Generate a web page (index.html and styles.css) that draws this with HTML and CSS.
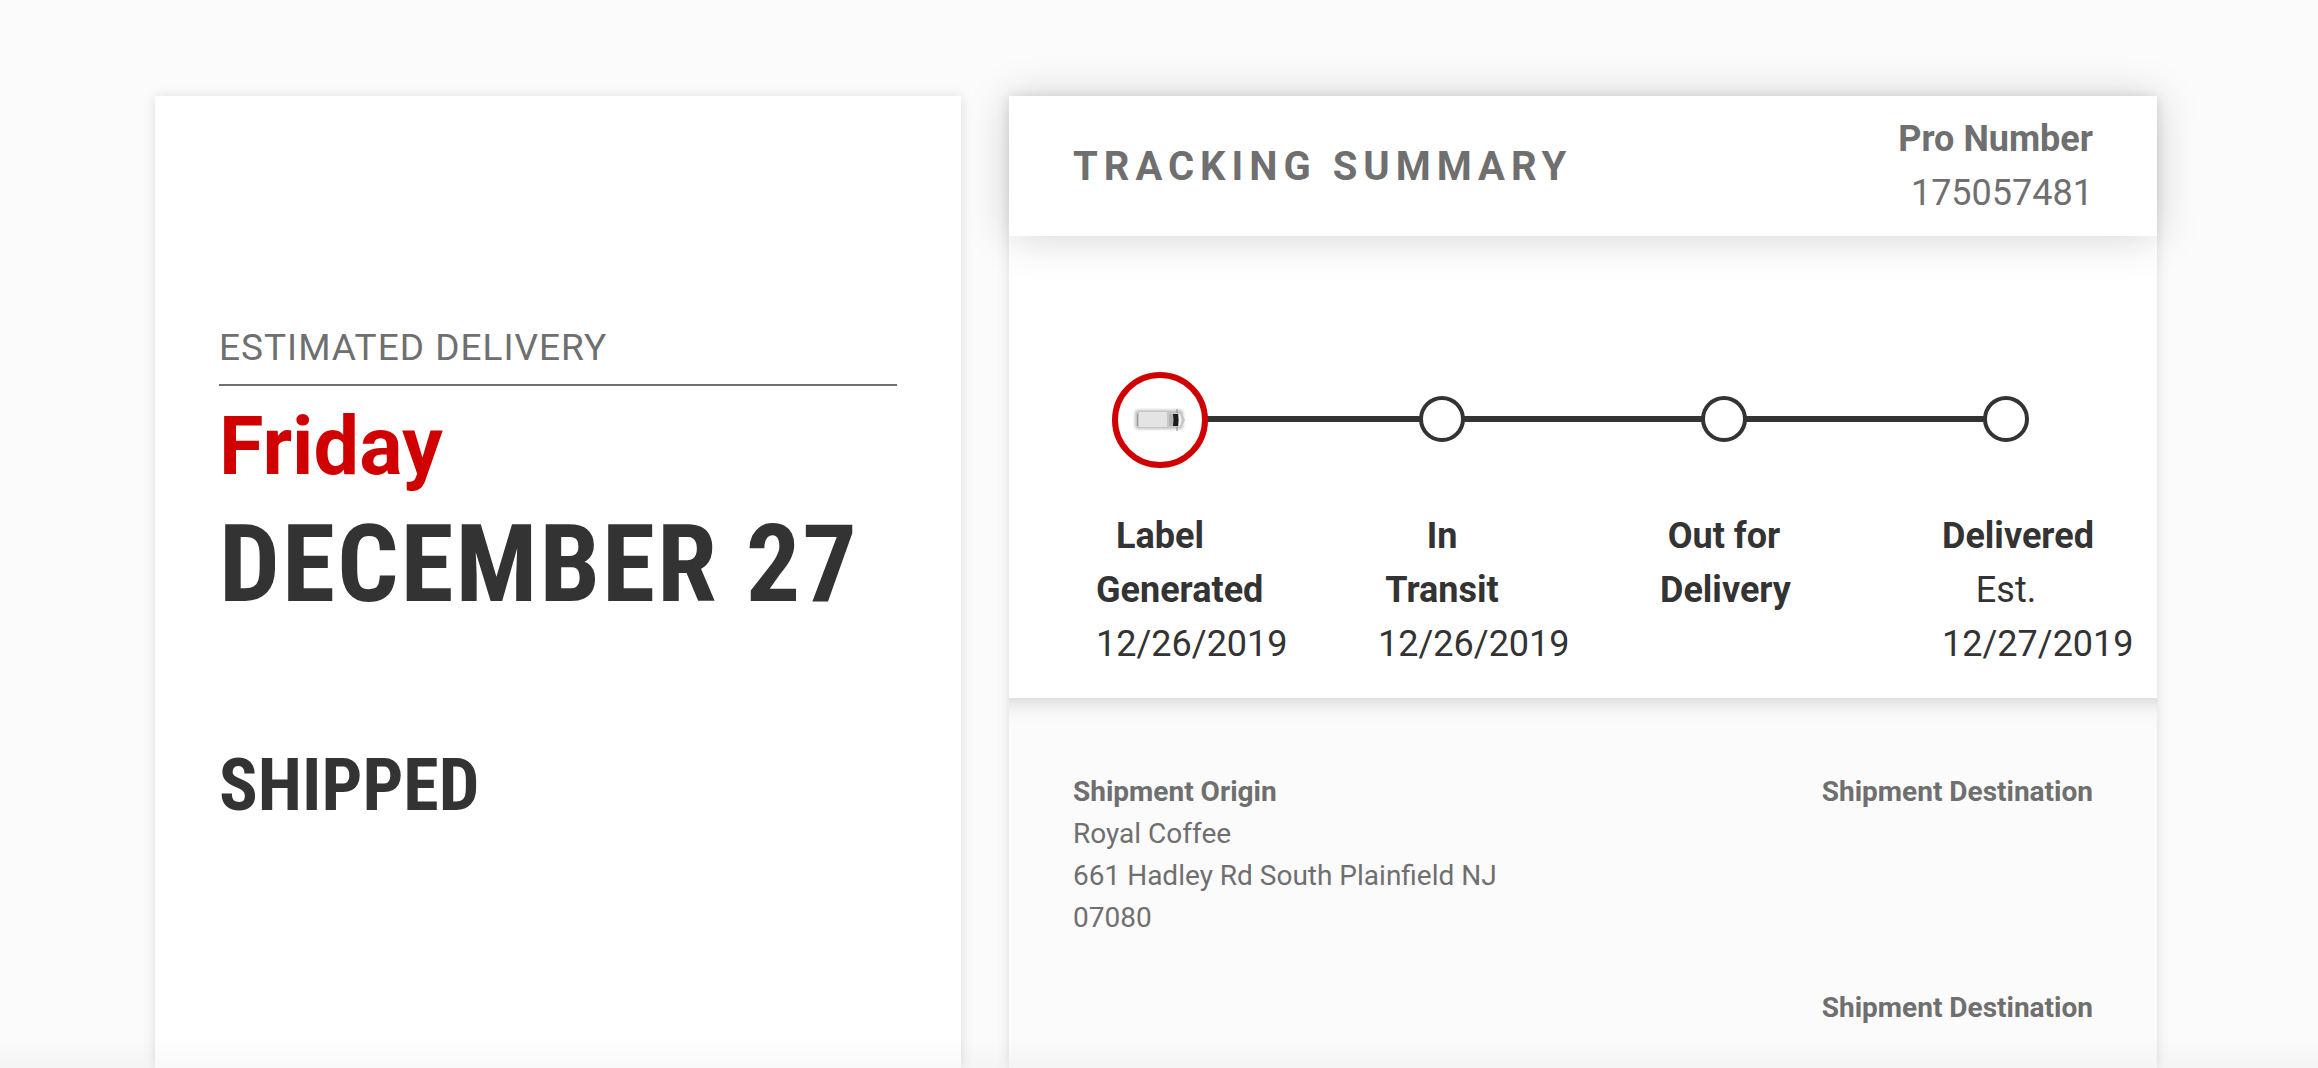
FILE: index.html
```
<!DOCTYPE html>
<html lang="en">
<head>
<meta charset="utf-8">
<title>Shipment Tracking</title>
<link rel="stylesheet" href="styles.css">
</head>
<body>
<main class="page">
  <section class="estimate">
    <p class="estimate-label">ESTIMATED DELIVERY</p>
    <p class="estimate-day">Friday</p>
    <p class="estimate-date">DECEMBER 27</p>
    <p class="estimate-status">SHIPPED</p>
  </section>
  <section class="summary">
    <header class="summary-head">
      <h1 class="summary-title">TRACKING SUMMARY</h1>
      <p class="pro"><strong>Pro Number</strong><span>175057481</span></p>
    </header>
    <ol class="steps">
      <li class="step current">
        <div class="marker"><svg class="truck" viewBox="0 0 54 24" aria-hidden="true">
          <defs>
            <filter id="shade" x="-20%" y="-40%" width="140%" height="180%"><feGaussianBlur stdDeviation="1.5"/></filter>
            <filter id="soft"><feGaussianBlur stdDeviation=".6"/></filter>
          </defs>
          <rect x="2" y="2" width="48" height="19" rx="3" fill="#bdbdbd" filter="url(#shade)"/>
          <g filter="url(#soft)">
            <rect x="3" y="4" width="34" height="15" rx="1" fill="#c8c8c8"/>
            <rect x="6" y="4" width="28" height="15" fill="#e4e4e4"/>
            <rect x="4" y="6" width="1" height="12" fill="#999"/>
            <path d="M34 5h12q4 1 6 7q-2 6-6 7H34z" fill="#c8c8c8"/>
            <path d="M46 5q5 7 0 14z" fill="#f2f2f2"/>
            <rect x="36" y="6" width="5" height="12" fill="#b4b4b4"/>
            <path d="M40 6h5q1 6 0 12h-5q1-6 0-12z" fill="#1c1c1c"/>
            <path d="M44 1v4M44 19v4" stroke="#888"/>
          </g>
        </svg></div>
        <div class="step-text"><strong>Label Generated</strong> <span>12/26/2019</span></div>
      </li>
      <li class="step">
        <div class="marker"></div>
        <div class="step-text"><strong>In<br>Transit</strong> <span>12/26/2019</span></div>
      </li>
      <li class="step">
        <div class="marker"></div>
        <div class="step-text"><strong>Out for Delivery</strong></div>
      </li>
      <li class="step">
        <div class="marker"></div>
        <div class="step-text"><strong>Delivered</strong> <span>Est. 12/27/2019</span></div>
      </li>
    </ol>
    <div class="details">
      <div class="origin">
        <h2>Shipment Origin</h2>
        <p>Royal Coffee</p>
        <p>661 Hadley Rd South Plainfield NJ 07080</p>
      </div>
      <div class="destination">
        <h2>Shipment Destination</h2>
        <h2>Shipment Destination</h2>
      </div>
    </div>
  </section>
</main>
</body>
</html>
```
FILE: styles.css
```
* { box-sizing: border-box; }
body {
  margin: 0;
  min-height: 100vh;
  background: #fbfbfb;
  color: #333;
  font-family: Roboto, "Liberation Sans", sans-serif;
}
/* soft fade along the bottom of the window */
body::after {
  content: "";
  position: fixed;
  inset: auto 0 0;
  height: 32px;
  background: linear-gradient(transparent, rgba(0, 0, 0, .025));
  pointer-events: none;
}
h1, h2, p, ol { margin: 0; padding: 0; }
.page {
  display: grid;
  grid-template-columns: minmax(0, 806fr) minmax(0, 1148fr);
  gap: 48px;
  min-height: 100vh;
  padding: 96px 161px 0 155px;
}
.estimate, .summary {
  background: #fff;
  box-shadow: 0 1px 12px rgba(0, 0, 0, .13);
}
.estimate { padding: 227px 64px 0; }
.estimate-label {
  padding-bottom: 11px;
  border-bottom: 2px solid #6f6f6f;
  color: #6f6f6f;
  font-size: 37px;
  line-height: 50px;
  letter-spacing: 1px;
}
.estimate-day {
  margin-top: 11px;
  color: #d00000;
  font-size: 81px;
  font-weight: 700;
  line-height: 100px;
}
.estimate-date, .estimate-status {
  font-family: "Roboto Condensed", Roboto, sans-serif;
  font-weight: 700;
}
.estimate-date {
  font-size: 108px;
  line-height: 134px;
  letter-spacing: 2px;
  white-space: nowrap;
}
.estimate-status { margin-top: 113px; font-size: 72px; line-height: 84px; }
.summary {
  display: flex;
  flex-direction: column;
}
.summary-head {
  display: flex;
  align-items: center;
  justify-content: space-between;
  padding: 16px 64px;
  color: #6f6f6f;
  box-shadow: 0 2px 40px rgba(0, 0, 0, .17);
}
.summary-title { font-size: 40px; letter-spacing: 6px; }
.pro {
  display: flex;
  flex-direction: column;
  text-align: right;
  font-size: 36px;
  line-height: 54px;
}
.steps {
  display: grid;
  grid-template-columns: repeat(3, 1fr) 128px;
  padding: 136px 87px 27px;
  list-style: none;
}
.step { position: relative; }
.marker {
  position: relative;
  z-index: 1;
  width: 46px;
  height: 46px;
  margin: 24px 41px 26px;
  border: 4px solid #333;
  border-radius: 50%;
  background: #fff;
}
.current .marker {
  display: grid;
  place-items: center;
  width: 96px;
  height: 96px;
  margin: 0 16px;
  border: 6px solid #d00000;
}
.truck { width: 54px; height: 24px; }
/* connector from the centre of one marker to the next */
.step:not(:last-child)::before {
  content: "";
  position: absolute;
  top: 44px;
  left: 64px;
  width: 100%;
  height: 6px;
  background: #333;
}
.step { display: flow-root; }
.step-text {
  width: 128px;
  padding-top: 41px;
  font-size: 36px;
  line-height: 54px;
  text-align: center;
}
.step:not(.current) .marker { margin-bottom: 26px; }
.details {
  display: flex;
  flex: 1;
  justify-content: space-between;
  padding: 73px 64px 24px;
  background: #fbfbfb;
  color: #6f6f6f;
  font-size: 28px;
  line-height: 42px;
  box-shadow: inset 0 24px 24px -24px rgba(0, 0, 0, .22);
}
.details h2 { font-size: 28px; line-height: 42px; }
.origin { width: 460px; }
.destination {
  display: flex;
  flex-direction: column;
  gap: 174px;
  text-align: right;
}
```
